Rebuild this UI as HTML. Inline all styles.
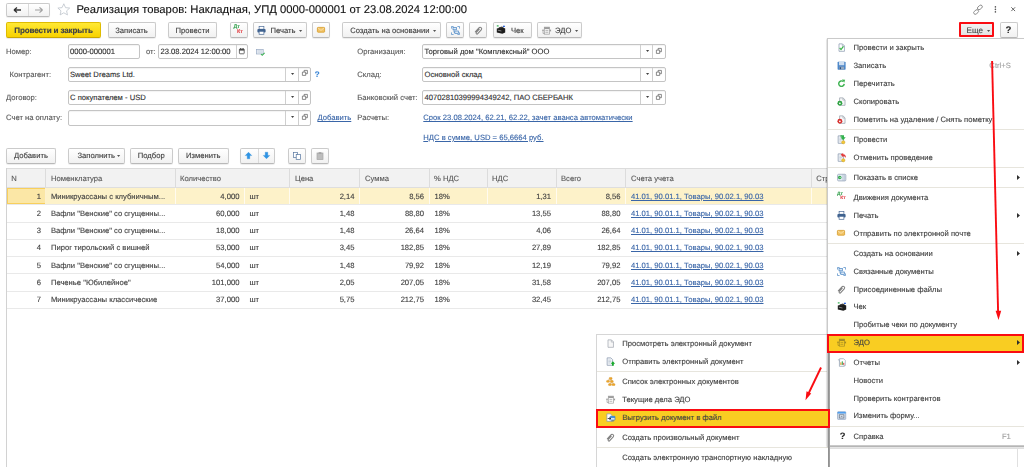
<!DOCTYPE html><html lang="ru"><head><meta charset="utf-8"><title>Реализация товаров</title><style>
html,body{margin:0;padding:0;background:#fff;}
body{width:1024px;height:467px;position:relative;overflow:hidden;font-family:"Liberation Sans",sans-serif;font-size:7.65px;color:#404040;}
div{position:absolute;box-sizing:border-box;}
#r{left:0;top:0;width:1024px;height:467px;overflow:hidden;opacity:.999;text-rendering:geometricPrecision;}
svg{position:absolute;overflow:visible;}
.t{white-space:nowrap;-webkit-text-stroke:.12px;}
.btn{border:1px solid #cbcbcb;border-radius:2px;background:linear-gradient(#ffffff,#f1f1f1);box-shadow:0 1px 1px rgba(0,0,0,.08);border-bottom-color:#b9b9b9;}
.ybtn{border:1px solid #dfbc00;border-radius:2px;background:linear-gradient(#ffe935,#f8d200);box-shadow:0 1px 1px rgba(0,0,0,.1);border-bottom-color:#c9a700;}
.inp{border:1px solid #c4c4c4;border-radius:2px;background:#fff;box-shadow:inset 0 1px 1px rgba(0,0,0,.05);}
.lbl{color:#585858;}
.lnk{color:#3a66a8;text-decoration:underline;text-decoration-thickness:.7px;}
.c{text-align:center;}
.sep{background:#e7e5dd;height:1px;}
.hl{background:#f9cd22;border:2px solid #fa0c12;}
.sc{color:#a2a2a2;}
</style></head><body><div id="r">
<div class="btn" style="left:6px;top:2.5px;width:43.5px;height:14px;"></div>
<div style="left:28px;top:3.5px;width:1px;height:12px;background:#dadada;"></div>
<svg style="left:6px;top:2.5px" width="44" height="14" viewBox="0 0 44 14"><path d="M8 7H15M8 7l3-2.6M8 7l3 2.6" stroke="#333" stroke-width="1.3" fill="none"/><path d="M36.5 7H29M36.5 7l-3-2.6M36.5 7l-3 2.6" stroke="#a0a0a0" stroke-width="1.2" fill="none"/></svg>
<svg style="left:56.7px;top:3px" width="13.6" height="12.6" viewBox="0 0 14 13"><path d="M7 .8l1.8 4 4.3.4-3.2 2.9.9 4.2L7 10.1l-3.8 2.2.9-4.2L.9 5.2l4.3-.4z" fill="#fff" stroke="#bcc2ca" stroke-width=".8"/></svg>
<div class="t " style="left:76.5px;top:2.3px;height:16px;line-height:16px;font-size:11.25px;color:#101010;">Реализация товаров: Накладная, УПД 0000-000001 от 23.08.2024 12:00:00</div>
<svg style="left:972.5px;top:4.5px" width="10" height="9.5" viewBox="0 0 10 9.5"><g fill="none" stroke="#888" stroke-width=".9"><rect x="4.2" y=".8" width="5.4" height="3.2" rx="1.6" transform="rotate(-40 6.9 2.4)"/><rect x=".4" y="5.4" width="5.4" height="3.2" rx="1.6" transform="rotate(-40 3.1 7)"/></g></svg>
<svg style="left:994px;top:5.8px" width="3" height="7" viewBox="0 0 3 7"><circle cx="1.4" cy=".9" r=".8" fill="#555"/><circle cx="1.4" cy="3.4" r=".8" fill="#555"/><circle cx="1.4" cy="5.9" r=".8" fill="#555"/></svg>
<svg style="left:1010.8px;top:7.3px" width="4.4" height="4.4" viewBox="0 0 4.4 4.4"><path d="M.3 .3l3.8 3.8M4.1 .3L.3 4.1" stroke="#555" stroke-width=".9"/></svg>
<div class="ybtn" style="left:6px;top:22px;width:95px;height:15.6px;"></div>
<div class="t c" style="left:6px;width:95px;top:24.9px;height:12px;line-height:12px;font-weight:bold;font-size:8.1px;letter-spacing:-.15px;color:#3e4046;">Провести и закрыть</div>
<div class="btn" style="left:107.5px;top:22px;width:48px;height:15.6px;"></div>
<div class="t c" style="left:107.5px;width:48px;top:24.9px;height:12px;line-height:12px;">Записать</div>
<div class="btn" style="left:168px;top:22px;width:49px;height:15.6px;"></div>
<div class="t c" style="left:168px;width:49px;top:24.9px;height:12px;line-height:12px;">Провести</div>
<div class="btn" style="left:230px;top:22px;width:17.5px;height:15.6px;"></div>
<div class="btn" style="left:253px;top:22px;width:53.5px;height:15.6px;"></div>
<div class="btn" style="left:312px;top:22px;width:17.7px;height:15.6px;"></div>
<div class="btn" style="left:342px;top:22px;width:98.5px;height:15.6px;"></div>
<div class="btn" style="left:446.4px;top:22px;width:17.6px;height:15.6px;"></div>
<div class="btn" style="left:469.4px;top:22px;width:17.6px;height:15.6px;"></div>
<div class="btn" style="left:493px;top:22px;width:38.5px;height:15.6px;"></div>
<div class="btn" style="left:537.2px;top:22px;width:45.3px;height:15.6px;"></div>
<div class="btn" style="left:999.5px;top:22px;width:18px;height:15.6px;"></div>
<div class="t c" style="left:999.5px;width:18px;top:25.3px;height:12px;line-height:12px;font-weight:bold;font-size:9.6px;color:#2a2a2a;">?</div>
<div style="left:958.6px;top:22.4px;width:35.6px;height:15px;background:linear-gradient(#f2f2f2,#e4e4e4);border:2px solid #fa0c12;border-radius:1px;"></div>
<div class="t " style="left:966.6px;top:24.6px;height:12px;line-height:12px;font-size:8.1px;color:#484848;">Еще</div>
<svg style="left:986.7px;top:30px" width="3.2" height="1.9" viewBox="0 0 3.2 1.9"><path d="M0 0h3.2L1.6 1.9z" fill="#555"/></svg>
<div class="t" style="left:233.6px;top:25.3px;font-size:5.3px;line-height:5.3px;font-weight:bold;color:#3aa352;">Дт</div>
<div class="t" style="left:237.098px;top:30.335px;font-size:5.3px;line-height:5.3px;font-weight:bold;color:#e2464b;">Кт</div>
<svg style="left:256.8px;top:25.8px" width="9" height="9" viewBox="0 0 9 9"><rect x="2.1" y=".6" width="4.8" height="2.6" fill="#fff" stroke="#4a6a96" stroke-width=".7"/><rect x=".4" y="3" width="8.2" height="3.6" rx="1" fill="#3f628f"/><rect x="2.1" y="5.3" width="4.8" height="3" fill="#fff" stroke="#4a6a96" stroke-width=".7"/></svg>
<div class="t " style="left:270.5px;top:24.9px;height:12px;line-height:12px;">Печать</div>
<svg style="left:298.7px;top:30px" width="3.2" height="1.9" viewBox="0 0 3.2 1.9"><path d="M0 0h3.2L1.6 1.9z" fill="#555"/></svg>
<svg style="left:317.3px;top:27.3px" width="8" height="5.6" viewBox="0 0 8 5.6"><rect x=".4" y=".4" width="7.2" height="4.8" rx=".6" fill="#f2c466" stroke="#d69a28" stroke-width=".8"/><path d="M.9 .9L4 3.4 7.1 .9" stroke="#fbe9c3" stroke-width=".7" fill="none"/></svg>
<div class="t " style="left:350.3px;top:24.9px;height:12px;line-height:12px;">Создать на основании</div>
<svg style="left:432.7px;top:30px" width="3.2" height="1.9" viewBox="0 0 3.2 1.9"><path d="M0 0h3.2L1.6 1.9z" fill="#555"/></svg>
<svg style="left:451px;top:25.8px" width="9" height="9" viewBox="0 0 9 9"><g fill="#dbe8f6" stroke="#4a86c4" stroke-width=".7"><rect x="2" y="1.4" width="3.4" height="2.4"/><rect x="3.8" y="5" width="3.6" height="2.6"/></g><path d="M.5 2.6V.5h2.1M8.5 2.6V.5H6.4M.5 6.4v2.1h2.1M8.5 6.4v2.1H6.4M3 3.8v2.6h.8" fill="none" stroke="#4a86c4" stroke-width=".7"/></svg>
<svg style="left:473.5px;top:25.8px" width="9" height="9" viewBox="0 0 9 9"><g transform="rotate(42 4.5 4.5)"><path d="M3 7.6V2.2a1.55 1.55 0 0 1 3.1 0v5.2a.95.95 0 0 1-1.9 0V3" fill="none" stroke="#808080" stroke-width="1.05" stroke-linecap="round"/></g></svg>
<svg style="left:496.3px;top:24.8px" width="10" height="9" viewBox="0 0 10 9"><path d="M.8 3.6l5.6-1.4 2.8 1.4v3.8L6.4 8.8.8 7.4z" fill="#1c1c1c"/><path d="M2.4 2.4l3.6-.9 1.8 1-3.6 1z" fill="#3a3a3a"/><rect x=".8" y=".3" width="1.8" height="1.2" fill="#2eae4e"/><rect x="7" y=".7" width="1.9" height="1.3" fill="#2a62d9"/><path d="M1.8 5.2l3.6.8" stroke="#c8c8c8" stroke-width=".6"/></svg>
<div class="t " style="left:511px;top:24.9px;height:12px;line-height:12px;">Чек</div>
<svg style="left:541.6px;top:25.6px" width="9.2" height="9.2" viewBox="0 0 16 16"><g fill="none" stroke="#9a9a9a" stroke-width="1.2"><rect x="4" y="2" width="9" height="12.2"/><path d="M6 8h5M6 11h5"/><path d="M4.2 13H1.8V7.4"/></g><rect x="4" y="2" width="9" height="3.4" fill="#9a9a9a"/><path d="M1.8 5.2L-.2 8.2h4zM12.6 7.8l3.2-2v4z" fill="#9a9a9a"/></svg>
<div class="t " style="left:555px;top:24.9px;height:12px;line-height:12px;">ЭДО</div>
<svg style="left:574.7px;top:30px" width="3.2" height="1.9" viewBox="0 0 3.2 1.9"><path d="M0 0h3.2L1.6 1.9z" fill="#555"/></svg>
<div class="t lbl" style="left:6px;top:46px;height:12px;line-height:12px;">Номер:</div>
<div class="inp" style="left:67.5px;top:44px;width:72px;height:15px;"></div>
<div class="t " style="left:70px;top:46px;height:12px;line-height:12px;color:#303030;">0000-000001</div>
<div class="t lbl" style="left:146px;top:46px;height:12px;line-height:12px;">от:</div>
<div class="inp" style="left:158px;top:44px;width:89.5px;height:15px;"></div>
<div class="t " style="left:160.5px;top:46px;height:12px;line-height:12px;color:#303030;">23.08.2024 12:00:00</div>
<div style="left:235.5px;top:45px;width:1px;height:13px;background:#cfcfcf;"></div>
<svg style="left:238.7px;top:47.9px" width="5.6" height="6.2" viewBox="0 0 5.6 6.2"><rect x=".4" y="1" width="4.8" height="4.8" rx=".6" fill="#fff" stroke="#4a4a4a" stroke-width=".8"/><rect x=".4" y="1" width="4.8" height="1.6" fill="#4a4a4a"/><path d="M1.5 0v1.4M4.1 0v1.4" stroke="#4a4a4a" stroke-width=".8"/></svg>
<svg style="left:255.7px;top:48.8px" width="9" height="7" viewBox="0 0 9 7"><rect x=".4" y=".4" width="6.8" height="4.6" fill="#e9eef5" stroke="#9aabc4" stroke-width=".7"/><path d="M1.5 1.8h4.6M1.5 3.2h4.6" stroke="#bcc7d8" stroke-width=".6"/><path d="M5 5l1.2 1.3L8.6 3.8" stroke="#3ab052" stroke-width="1.1" fill="none"/></svg>
<div class="t lbl" style="left:9.5px;top:68.5px;height:12px;line-height:12px;">Контрагент:</div>
<div class="inp" style="left:67.5px;top:67px;width:243.3px;height:15px;"></div>
<div class="t " style="left:70px;top:68.5px;height:12px;line-height:12px;color:#303030;">Sweet Dreams Ltd.</div>
<div style="left:285.3px;top:68px;width:1px;height:13px;background:#cfcfcf;"></div>
<div style="left:298.2px;top:68px;width:1px;height:13px;background:#cfcfcf;"></div>
<svg style="left:290.6px;top:72.7px" width="3.2" height="1.9" viewBox="0 0 3.2 1.9"><path d="M0 0h3.2L1.6 1.9z" fill="#444"/></svg>
<svg style="left:301.7px;top:70.4px" width="5.8" height="5.8" viewBox="0 0 5.8 5.8"><path d="M2.1 .4h3.3v3.3H2.1z" fill="#fff" stroke="#5a5a5a" stroke-width=".7"/><path d="M.4 2.1h3.3v3.3H.4z" fill="#fff" stroke="#5a5a5a" stroke-width=".7"/></svg>
<div class="t " style="left:314.7px;top:68.5px;height:12px;line-height:12px;color:#3b86d6;font-weight:bold;font-size:8px;">?</div>
<div class="t lbl" style="left:6px;top:92px;height:12px;line-height:12px;">Договор:</div>
<div class="inp" style="left:67.5px;top:90px;width:243.3px;height:15px;"></div>
<div class="t " style="left:70px;top:92px;height:12px;line-height:12px;color:#303030;">С покупателем - USD</div>
<div style="left:285.3px;top:91px;width:1px;height:13px;background:#cfcfcf;"></div>
<div style="left:298.2px;top:91px;width:1px;height:13px;background:#cfcfcf;"></div>
<svg style="left:290.6px;top:96.2px" width="3.2" height="1.9" viewBox="0 0 3.2 1.9"><path d="M0 0h3.2L1.6 1.9z" fill="#444"/></svg>
<svg style="left:301.7px;top:93.9px" width="5.8" height="5.8" viewBox="0 0 5.8 5.8"><path d="M2.1 .4h3.3v3.3H2.1z" fill="#fff" stroke="#5a5a5a" stroke-width=".7"/><path d="M.4 2.1h3.3v3.3H.4z" fill="#fff" stroke="#5a5a5a" stroke-width=".7"/></svg>
<div class="t lbl" style="left:6px;top:112.2px;height:12px;line-height:12px;">Счет на оплату:</div>
<div class="inp" style="left:67.5px;top:110px;width:243.3px;height:16px;"></div>
<div style="left:285.3px;top:111px;width:1px;height:14px;background:#cfcfcf;"></div>
<div style="left:298.2px;top:111px;width:1px;height:14px;background:#cfcfcf;"></div>
<svg style="left:290.6px;top:116.4px" width="3.2" height="1.9" viewBox="0 0 3.2 1.9"><path d="M0 0h3.2L1.6 1.9z" fill="#444"/></svg>
<svg style="left:301.7px;top:114.1px" width="5.8" height="5.8" viewBox="0 0 5.8 5.8"><path d="M2.1 .4h3.3v3.3H2.1z" fill="#fff" stroke="#5a5a5a" stroke-width=".7"/><path d="M.4 2.1h3.3v3.3H.4z" fill="#fff" stroke="#5a5a5a" stroke-width=".7"/></svg>
<div class="t lnk" style="left:317.5px;top:112.2px;height:12px;line-height:12px;">Добавить</div>
<div class="t lbl" style="left:357.3px;top:46px;height:12px;line-height:12px;">Организация:</div>
<div class="inp" style="left:422px;top:44px;width:243.6px;height:15px;"></div>
<div class="t " style="left:424.5px;top:46px;height:12px;line-height:12px;color:#303030;">Торговый дом "Комплексный" ООО</div>
<div style="left:640.2px;top:45px;width:1px;height:13px;background:#cfcfcf;"></div>
<div style="left:652.2px;top:45px;width:1px;height:13px;background:#cfcfcf;"></div>
<svg style="left:645.5px;top:50.2px" width="3.2" height="1.9" viewBox="0 0 3.2 1.9"><path d="M0 0h3.2L1.6 1.9z" fill="#444"/></svg>
<svg style="left:655.7px;top:47.9px" width="5.8" height="5.8" viewBox="0 0 5.8 5.8"><path d="M2.1 .4h3.3v3.3H2.1z" fill="#fff" stroke="#5a5a5a" stroke-width=".7"/><path d="M.4 2.1h3.3v3.3H.4z" fill="#fff" stroke="#5a5a5a" stroke-width=".7"/></svg>
<div class="t lbl" style="left:357.3px;top:68.5px;height:12px;line-height:12px;">Склад:</div>
<div class="inp" style="left:422px;top:67px;width:243.6px;height:15px;"></div>
<div class="t " style="left:424.5px;top:68.5px;height:12px;line-height:12px;color:#303030;">Основной склад</div>
<div style="left:640.2px;top:68px;width:1px;height:13px;background:#cfcfcf;"></div>
<div style="left:652.2px;top:68px;width:1px;height:13px;background:#cfcfcf;"></div>
<svg style="left:645.5px;top:72.7px" width="3.2" height="1.9" viewBox="0 0 3.2 1.9"><path d="M0 0h3.2L1.6 1.9z" fill="#444"/></svg>
<svg style="left:655.7px;top:70.4px" width="5.8" height="5.8" viewBox="0 0 5.8 5.8"><path d="M2.1 .4h3.3v3.3H2.1z" fill="#fff" stroke="#5a5a5a" stroke-width=".7"/><path d="M.4 2.1h3.3v3.3H.4z" fill="#fff" stroke="#5a5a5a" stroke-width=".7"/></svg>
<div class="t lbl" style="left:357.3px;top:92px;height:12px;line-height:12px;">Банковский счет:</div>
<div class="inp" style="left:422px;top:90px;width:243.6px;height:15px;"></div>
<div class="t " style="left:424.5px;top:92px;height:12px;line-height:12px;color:#303030;">40702810399994349242, ПАО СБЕРБАНК</div>
<div style="left:640.2px;top:91px;width:1px;height:13px;background:#cfcfcf;"></div>
<div style="left:652.2px;top:91px;width:1px;height:13px;background:#cfcfcf;"></div>
<svg style="left:645.5px;top:96.2px" width="3.2" height="1.9" viewBox="0 0 3.2 1.9"><path d="M0 0h3.2L1.6 1.9z" fill="#444"/></svg>
<svg style="left:655.7px;top:93.9px" width="5.8" height="5.8" viewBox="0 0 5.8 5.8"><path d="M2.1 .4h3.3v3.3H2.1z" fill="#fff" stroke="#5a5a5a" stroke-width=".7"/><path d="M.4 2.1h3.3v3.3H.4z" fill="#fff" stroke="#5a5a5a" stroke-width=".7"/></svg>
<div class="t lbl" style="left:357.3px;top:112.2px;height:12px;line-height:12px;">Расчеты:</div>
<div class="t lnk" style="left:423.3px;top:112.2px;height:12px;line-height:12px;">Срок 23.08.2024, 62.21, 62.22, зачет аванса автоматически</div>
<div class="t lnk" style="left:423.3px;top:131.6px;height:12px;line-height:12px;">НДС в сумме, USD = 65,6664 руб.</div>
<div class="btn" style="left:6px;top:148px;width:50px;height:15.6px;"></div>
<div class="t c" style="left:6px;width:50px;top:150.4px;height:12px;line-height:12px;">Добавить</div>
<div class="btn" style="left:68px;top:148px;width:56.5px;height:15.6px;"></div>
<div class="t " style="left:77.5px;top:150.4px;height:12px;line-height:12px;">Заполнить</div>
<svg style="left:116.7px;top:155.1px" width="3.2" height="1.9" viewBox="0 0 3.2 1.9"><path d="M0 0h3.2L1.6 1.9z" fill="#555"/></svg>
<div class="btn" style="left:130px;top:148px;width:42.5px;height:15.6px;"></div>
<div class="t c" style="left:130px;width:42.5px;top:150.4px;height:12px;line-height:12px;">Подбор</div>
<div class="btn" style="left:178px;top:148px;width:50.5px;height:15.6px;"></div>
<div class="t c" style="left:178px;width:50.5px;top:150.4px;height:12px;line-height:12px;">Изменить</div>
<div class="btn" style="left:240.3px;top:148px;width:35.1px;height:15.6px;"></div>
<div style="left:257.6px;top:149px;width:1px;height:13.6px;background:#dadada;"></div>
<svg style="left:245.4px;top:152px" width="7" height="7" viewBox="0 0 7 7"><path d="M3.5 .2L6.8 3.6H4.8V6.8H2.2V3.6H.2z" fill="#2d94e6" stroke="#2583cf" stroke-width=".3"/></svg>
<svg style="left:262.8px;top:152px" width="7" height="7" viewBox="0 0 7 7"><path d="M3.5 6.8L6.8 3.4H4.8V.2H2.2V3.4H.2z" fill="#2d94e6" stroke="#2583cf" stroke-width=".3"/></svg>
<div class="btn" style="left:287.5px;top:148px;width:18px;height:15.6px;"></div>
<div class="btn" style="left:311px;top:148px;width:18px;height:15.6px;"></div>
<svg style="left:292.7px;top:151.6px" width="8" height="8" viewBox="0 0 8 8"><rect x=".4" y=".4" width="4.2" height="5" fill="#fff" stroke="#55759f" stroke-width=".7"/><rect x="3.2" y="2.6" width="4.2" height="5" fill="#fff" stroke="#55759f" stroke-width=".7"/></svg>
<svg style="left:316px;top:151.6px" width="8" height="8" viewBox="0 0 8 8"><rect x="1" y="1" width="6" height="6.6" fill="#bdbdbd" stroke="#a6a6a6" stroke-width=".7"/><rect x="2.6" y=".2" width="2.8" height="1.6" fill="#a0a0a0"/></svg>
<div style="left:6px;top:168px;width:1018px;height:20px;background:#f2f2f2;border-top:1px solid #dcdcdc;border-bottom:1px solid #dedede;"></div>
<div style="left:6px;top:168.3px;width:1px;height:298.7px;background:#d2d2d2;"></div>
<div style="left:45.2px;top:169px;width:1px;height:18px;background:#dcdcdc;"></div>
<div style="left:175px;top:169px;width:1px;height:18px;background:#dcdcdc;"></div>
<div style="left:289.3px;top:169px;width:1px;height:18px;background:#dcdcdc;"></div>
<div style="left:359.2px;top:169px;width:1px;height:18px;background:#dcdcdc;"></div>
<div style="left:429px;top:169px;width:1px;height:18px;background:#dcdcdc;"></div>
<div style="left:486.5px;top:169px;width:1px;height:18px;background:#dcdcdc;"></div>
<div style="left:555.5px;top:169px;width:1px;height:18px;background:#dcdcdc;"></div>
<div style="left:625px;top:169px;width:1px;height:18px;background:#dcdcdc;"></div>
<div style="left:811.2px;top:169px;width:1px;height:18px;background:#dcdcdc;"></div>
<div class="t lbl" style="left:11.3px;top:172.8px;height:12px;line-height:12px;">N</div>
<div class="t lbl" style="left:51px;top:172.8px;height:12px;line-height:12px;">Номенклатура</div>
<div class="t lbl" style="left:180px;top:172.8px;height:12px;line-height:12px;">Количество</div>
<div class="t lbl" style="left:295px;top:172.8px;height:12px;line-height:12px;">Цена</div>
<div class="t lbl" style="left:365px;top:172.8px;height:12px;line-height:12px;">Сумма</div>
<div class="t lbl" style="left:434px;top:172.8px;height:12px;line-height:12px;">% НДС</div>
<div class="t lbl" style="left:492px;top:172.8px;height:12px;line-height:12px;">НДС</div>
<div class="t lbl" style="left:561px;top:172.8px;height:12px;line-height:12px;">Всего</div>
<div class="t lbl" style="left:631px;top:172.8px;height:12px;line-height:12px;">Счета учета</div>
<div class="t lbl" style="left:816.2px;top:172.8px;height:12px;line-height:12px;">Стр</div>
<div style="left:7px;top:187.5px;width:1017px;height:17.25px;background:#fdf2c9;"></div>
<div style="left:7px;top:187.5px;width:38.7px;height:16.95px;background:#fbe7a6;border:1.5px solid #f8cf5c;"></div>
<div style="left:45.2px;top:187.5px;width:1px;height:17.25px;background:#fff;opacity:.7"></div>
<div style="left:175px;top:187.5px;width:1px;height:17.25px;background:#fff;opacity:.7"></div>
<div style="left:289.3px;top:187.5px;width:1px;height:17.25px;background:#fff;opacity:.7"></div>
<div style="left:359.2px;top:187.5px;width:1px;height:17.25px;background:#fff;opacity:.7"></div>
<div style="left:429px;top:187.5px;width:1px;height:17.25px;background:#fff;opacity:.7"></div>
<div style="left:486.5px;top:187.5px;width:1px;height:17.25px;background:#fff;opacity:.7"></div>
<div style="left:555.5px;top:187.5px;width:1px;height:17.25px;background:#fff;opacity:.7"></div>
<div style="left:625px;top:187.5px;width:1px;height:17.25px;background:#fff;opacity:.7"></div>
<div style="left:811.2px;top:187.5px;width:1px;height:17.25px;background:#fff;opacity:.7"></div>
<div style="left:244px;top:187.5px;width:1px;height:17.25px;background:#fff;opacity:.7"></div>
<div style="left:7px;top:204.25px;width:1017px;height:1px;background:#e9e9e9;"></div>
<div class="t " style="right:983px;top:190.625px;height:12px;line-height:12px;">1</div>
<div class="t " style="left:50.9px;top:190.625px;height:12px;line-height:12px;">Миникруассаны с клубничным...</div>
<div class="t " style="right:784.6px;top:190.625px;height:12px;line-height:12px;">4,000</div>
<div class="t " style="left:249.4px;top:190.625px;height:12px;line-height:12px;">шт</div>
<div class="t " style="right:669.5px;top:190.625px;height:12px;line-height:12px;">2,14</div>
<div class="t " style="right:600px;top:190.625px;height:12px;line-height:12px;">8,56</div>
<div class="t " style="left:434.5px;top:190.625px;height:12px;line-height:12px;">18%</div>
<div class="t " style="right:473px;top:190.625px;height:12px;line-height:12px;">1,31</div>
<div class="t " style="right:403.5px;top:190.625px;height:12px;line-height:12px;">8,56</div>
<div class="t lnk" style="left:631px;top:190.625px;height:12px;line-height:12px;">41.01, 90.01.1, Товары, 90.02.1, 90.03</div>
<div style="left:7px;top:221.5px;width:1017px;height:1px;background:#e9e9e9;"></div>
<div class="t " style="right:983px;top:207.875px;height:12px;line-height:12px;">2</div>
<div class="t " style="left:50.9px;top:207.875px;height:12px;line-height:12px;">Вафли "Венские" со сгущенны...</div>
<div class="t " style="right:784.6px;top:207.875px;height:12px;line-height:12px;">60,000</div>
<div class="t " style="left:249.4px;top:207.875px;height:12px;line-height:12px;">шт</div>
<div class="t " style="right:669.5px;top:207.875px;height:12px;line-height:12px;">1,48</div>
<div class="t " style="right:600px;top:207.875px;height:12px;line-height:12px;">88,80</div>
<div class="t " style="left:434.5px;top:207.875px;height:12px;line-height:12px;">18%</div>
<div class="t " style="right:473px;top:207.875px;height:12px;line-height:12px;">13,55</div>
<div class="t " style="right:403.5px;top:207.875px;height:12px;line-height:12px;">88,80</div>
<div class="t lnk" style="left:631px;top:207.875px;height:12px;line-height:12px;">41.01, 90.01.1, Товары, 90.02.1, 90.03</div>
<div style="left:7px;top:238.75px;width:1017px;height:1px;background:#e9e9e9;"></div>
<div class="t " style="right:983px;top:225.125px;height:12px;line-height:12px;">3</div>
<div class="t " style="left:50.9px;top:225.125px;height:12px;line-height:12px;">Вафли "Венские" со сгущенны...</div>
<div class="t " style="right:784.6px;top:225.125px;height:12px;line-height:12px;">18,000</div>
<div class="t " style="left:249.4px;top:225.125px;height:12px;line-height:12px;">шт</div>
<div class="t " style="right:669.5px;top:225.125px;height:12px;line-height:12px;">1,48</div>
<div class="t " style="right:600px;top:225.125px;height:12px;line-height:12px;">26,64</div>
<div class="t " style="left:434.5px;top:225.125px;height:12px;line-height:12px;">18%</div>
<div class="t " style="right:473px;top:225.125px;height:12px;line-height:12px;">4,06</div>
<div class="t " style="right:403.5px;top:225.125px;height:12px;line-height:12px;">26,64</div>
<div class="t lnk" style="left:631px;top:225.125px;height:12px;line-height:12px;">41.01, 90.01.1, Товары, 90.02.1, 90.03</div>
<div style="left:7px;top:256px;width:1017px;height:1px;background:#e9e9e9;"></div>
<div class="t " style="right:983px;top:242.375px;height:12px;line-height:12px;">4</div>
<div class="t " style="left:50.9px;top:242.375px;height:12px;line-height:12px;">Пирог тирольский с вишней</div>
<div class="t " style="right:784.6px;top:242.375px;height:12px;line-height:12px;">53,000</div>
<div class="t " style="left:249.4px;top:242.375px;height:12px;line-height:12px;">шт</div>
<div class="t " style="right:669.5px;top:242.375px;height:12px;line-height:12px;">3,45</div>
<div class="t " style="right:600px;top:242.375px;height:12px;line-height:12px;">182,85</div>
<div class="t " style="left:434.5px;top:242.375px;height:12px;line-height:12px;">18%</div>
<div class="t " style="right:473px;top:242.375px;height:12px;line-height:12px;">27,89</div>
<div class="t " style="right:403.5px;top:242.375px;height:12px;line-height:12px;">182,85</div>
<div class="t lnk" style="left:631px;top:242.375px;height:12px;line-height:12px;">41.01, 90.01.1, Товары, 90.02.1, 90.03</div>
<div style="left:7px;top:273.25px;width:1017px;height:1px;background:#e9e9e9;"></div>
<div class="t " style="right:983px;top:259.625px;height:12px;line-height:12px;">5</div>
<div class="t " style="left:50.9px;top:259.625px;height:12px;line-height:12px;">Вафли "Венские" со сгущенны...</div>
<div class="t " style="right:784.6px;top:259.625px;height:12px;line-height:12px;">54,000</div>
<div class="t " style="left:249.4px;top:259.625px;height:12px;line-height:12px;">шт</div>
<div class="t " style="right:669.5px;top:259.625px;height:12px;line-height:12px;">1,48</div>
<div class="t " style="right:600px;top:259.625px;height:12px;line-height:12px;">79,92</div>
<div class="t " style="left:434.5px;top:259.625px;height:12px;line-height:12px;">18%</div>
<div class="t " style="right:473px;top:259.625px;height:12px;line-height:12px;">12,19</div>
<div class="t " style="right:403.5px;top:259.625px;height:12px;line-height:12px;">79,92</div>
<div class="t lnk" style="left:631px;top:259.625px;height:12px;line-height:12px;">41.01, 90.01.1, Товары, 90.02.1, 90.03</div>
<div style="left:7px;top:290.5px;width:1017px;height:1px;background:#e9e9e9;"></div>
<div class="t " style="right:983px;top:276.875px;height:12px;line-height:12px;">6</div>
<div class="t " style="left:50.9px;top:276.875px;height:12px;line-height:12px;">Печенье "Юбилейное"</div>
<div class="t " style="right:784.6px;top:276.875px;height:12px;line-height:12px;">101,000</div>
<div class="t " style="left:249.4px;top:276.875px;height:12px;line-height:12px;">шт</div>
<div class="t " style="right:669.5px;top:276.875px;height:12px;line-height:12px;">2,05</div>
<div class="t " style="right:600px;top:276.875px;height:12px;line-height:12px;">207,05</div>
<div class="t " style="left:434.5px;top:276.875px;height:12px;line-height:12px;">18%</div>
<div class="t " style="right:473px;top:276.875px;height:12px;line-height:12px;">31,58</div>
<div class="t " style="right:403.5px;top:276.875px;height:12px;line-height:12px;">207,05</div>
<div class="t lnk" style="left:631px;top:276.875px;height:12px;line-height:12px;">41.01, 90.01.1, Товары, 90.02.1, 90.03</div>
<div style="left:7px;top:307.75px;width:1017px;height:1px;background:#e9e9e9;"></div>
<div class="t " style="right:983px;top:294.125px;height:12px;line-height:12px;">7</div>
<div class="t " style="left:50.9px;top:294.125px;height:12px;line-height:12px;">Миникруассаны классические</div>
<div class="t " style="right:784.6px;top:294.125px;height:12px;line-height:12px;">37,000</div>
<div class="t " style="left:249.4px;top:294.125px;height:12px;line-height:12px;">шт</div>
<div class="t " style="right:669.5px;top:294.125px;height:12px;line-height:12px;">5,75</div>
<div class="t " style="right:600px;top:294.125px;height:12px;line-height:12px;">212,75</div>
<div class="t " style="left:434.5px;top:294.125px;height:12px;line-height:12px;">18%</div>
<div class="t " style="right:473px;top:294.125px;height:12px;line-height:12px;">32,45</div>
<div class="t " style="right:403.5px;top:294.125px;height:12px;line-height:12px;">212,75</div>
<div class="t lnk" style="left:631px;top:294.125px;height:12px;line-height:12px;">41.01, 90.01.1, Товары, 90.02.1, 90.03</div>
<div style="left:830px;top:448px;width:194px;height:1px;background:#e0e0e0;"></div>
<div style="left:1017px;top:448px;width:1px;height:19px;background:#e0e0e0;"></div>
<div style="left:595.5px;top:333.5px;width:234px;height:140px;background:#fff;border:1px solid #d6d6d6;border-right:none;"></div>
<div class="sep" style="left:596.5px;top:370.9px;width:232.5px;height:1px;"></div>
<div class="sep" style="left:596.5px;top:446.9px;width:232.5px;height:1px;"></div>
<svg style="left:605.6px;top:339.1px" width="9.2" height="9.2" viewBox="0 0 16 16"><path d="M3.5 1.5h6l3.5 3.5v9.5h-9.5z" fill="#f7f7f7" stroke="#a5aab2" stroke-width="1.3"/><path d="M9.3 1.8v3.6h3.6" fill="none" stroke="#a5aab2" stroke-width="1"/></svg>
<div class="t " style="left:622.2px;top:337.9px;height:12px;line-height:12px;">Просмотреть электронный документ</div>
<svg style="left:605.6px;top:357.4px" width="9.2" height="9.2" viewBox="0 0 16 16"><path d="M2 1.5h6.5l3 3v10H2z" fill="#f1f4f8" stroke="#8c9bb0" stroke-width="1.3"/><path d="M4 5.5h4.5M4 8h5M4 10.5h3.5" stroke="#a9b5c6" stroke-width="1"/><path d="M12 7.4l3.8 4.2h-2.2v3.6h-3.2v-3.6H8.2z" fill="#18a82c"/></svg>
<div class="t " style="left:622.2px;top:356.2px;height:12px;line-height:12px;">Отправить электронный документ</div>
<svg style="left:605.6px;top:377.4px" width="9.2" height="9.2" viewBox="0 0 16 16"><g fill="#f1a92c" stroke="#d08a18" stroke-width=".7"><rect x="5.6" y=".8" width="5" height="3.2" rx="1"/><rect x="1" y="6" width="5" height="3.2" rx="1"/><rect x="7.6" y="6" width="5" height="3.2" rx="1"/><rect x="4.4" y="11.6" width="5" height="3.2" rx="1"/><rect x="10.6" y="11.6" width="5" height="3.2" rx="1"/></g><path d="M8 4v1M3.6 6V5h6.6v1M10 9.2v1.2M6.8 11.6v-1.2h6.4v1.2" stroke="#d08a18" stroke-width=".8" fill="none"/></svg>
<div class="t " style="left:622.2px;top:376.2px;height:12px;line-height:12px;">Список электронных документов</div>
<svg style="left:605.6px;top:395.3px" width="9.2" height="9.2" viewBox="0 0 16 16"><g fill="none" stroke="#9c9c9c" stroke-width="1.2"><rect x="4" y="2" width="9" height="12.2"/><path d="M6 8h5M6 11h5"/><path d="M4.2 13H1.8V7.4"/></g><rect x="4" y="2" width="9" height="3.4" fill="#9c9c9c"/><path d="M1.8 5.2L-.2 8.2h4zM12.6 7.8l3.2-2v4z" fill="#9c9c9c"/></svg>
<div class="t " style="left:622.2px;top:394.1px;height:12px;line-height:12px;">Текущие дела ЭДО</div>
<svg style="left:605.7px;top:433.2px" width="9" height="9" viewBox="0 0 9 9"><g transform="rotate(42 4.5 4.5)"><path d="M3 7.6V2.2a1.55 1.55 0 0 1 3.1 0v5.2a.95.95 0 0 1-1.9 0V3" fill="none" stroke="#808080" stroke-width="1.05" stroke-linecap="round"/></g></svg>
<div class="t " style="left:622.2px;top:431.9px;height:12px;line-height:12px;">Создать произвольный документ</div>
<div class="t " style="left:622.2px;top:452.1px;height:12px;line-height:12px;">Создать электронную транспортную накладную</div>
<div style="left:827.4px;top:38px;width:198.6px;height:408px;background:#fff;border:1px solid #cacaca;box-shadow:0 1px 1.5px rgba(0,0,0,.4);"></div>
<div class="sep" style="left:828.4px;top:128.8px;width:196.6px;height:1px;"></div>
<div class="sep" style="left:828.4px;top:166.8px;width:196.6px;height:1px;"></div>
<div class="sep" style="left:828.4px;top:187px;width:196.6px;height:1px;"></div>
<div class="sep" style="left:828.4px;top:242.7px;width:196.6px;height:1px;"></div>
<div class="sep" style="left:828.4px;top:426px;width:196.6px;height:1px;"></div>
<div style="left:828px;top:352.3px;width:2px;height:114.7px;background:linear-gradient(90deg,#9a9a9a,#8a8a8a 50%,#b5b5b5);"></div>
<div class="hl" style="left:827.2px;top:333.6px;width:197px;height:19px;"></div>
<div class="hl" style="left:595.5px;top:408.6px;width:234.5px;height:19.2px;"></div>
<svg style="left:605.8px;top:413.2px" width="9.2" height="9.2" viewBox="0 0 16 16"><path d="M1.5 1.5h6l3.5 3.5v9.5H1.5z" fill="#fff" stroke="#8a939e" stroke-width="1.2"/><rect x="7.4" y="5.8" width="8.2" height="6.6" rx=".6" fill="#d6e6f6" stroke="#2f80d2" stroke-width="1.2"/><rect x="7.4" y="5.8" width="8.2" height="2.6" fill="#2f80d2"/><rect x="9" y="13" width="5" height="1.6" fill="#6d7b8c"/><path d="M3 9.6h5M6 7.6l2.4 2L6 11.6" stroke="#1c1c1c" stroke-width="1.3" fill="none"/></svg>
<div class="t " style="left:622.2px;top:411.9px;height:12px;line-height:12px;">Выгрузить документ в файл</div>
<svg style="left:837.2px;top:43.4px" width="9.2" height="9.2" viewBox="0 0 16 16"><path d="M3.5 1.5h6l3.5 3.5v9.5h-9.5z" fill="#fff" stroke="#8e9db3" stroke-width="1.3"/><path d="M9.3 1.8v3.6h3.6" fill="none" stroke="#8e9db3" stroke-width="1"/><path d="M4.6 8.6l2.4 2.8 4.2-5.4" fill="none" stroke="#3cb54a" stroke-width="2.2"/></svg>
<div class="t " style="left:853.5px;top:42.4px;height:12px;line-height:12px;">Провести и закрыть</div>
<svg style="left:837.2px;top:60.7px" width="9.2" height="9.2" viewBox="0 0 16 16"><rect x="1" y="1.2" width="14" height="14" rx="1.2" fill="#4b86c9"/><rect x="3.4" y="1.6" width="9.2" height="5.8" fill="#cfdff1"/><rect x="3.8" y="9.8" width="8.4" height="5.2" fill="#93a7be"/><rect x="4.8" y="10.8" width="2.2" height="3.4" fill="#2d4f80"/></svg>
<div class="t " style="left:853.5px;top:59.7px;height:12px;line-height:12px;">Записать</div>
<div class="t sc" style="right:13.2px;top:59.7px;height:12px;line-height:12px;">Ctrl+S</div>
<svg style="left:837.2px;top:78.9px" width="9.2" height="9.2" viewBox="0 0 16 16"><path d="M12.6 8.6a4.8 4.8 0 1 1-1.9-4.4" fill="none" stroke="#3db250" stroke-width="2.5"/><path d="M8.6 1l5.6.4-1.6 5.2z" fill="#3db250"/></svg>
<div class="t " style="left:853.5px;top:77.9px;height:12px;line-height:12px;">Перечитать</div>
<svg style="left:837.2px;top:96.7px" width="9.2" height="9.2" viewBox="0 0 16 16"><path d="M4.5 1.5h6l3.5 3.5v9.5H4.5z" fill="#f6f7f8" stroke="#9aa3ad" stroke-width="1.3"/><path d="M10.3 1.8v3.6h3.6" fill="none" stroke="#9aa3ad" stroke-width="1"/><circle cx="5" cy="11" r="4.3" fill="#2fa343"/><circle cx="5" cy="11" r="1.5" fill="#fff"/></svg>
<div class="t " style="left:853.5px;top:95.7px;height:12px;line-height:12px;">Скопировать</div>
<svg style="left:837.2px;top:114.7px" width="9.2" height="9.2" viewBox="0 0 16 16"><path d="M4.5 1.5h6l3.5 3.5v9.5H4.5z" fill="#f6f7f8" stroke="#9aa3ad" stroke-width="1.3"/><path d="M10.3 1.8v3.6h3.6" fill="none" stroke="#9aa3ad" stroke-width="1"/><circle cx="5" cy="11" r="4.3" fill="#d8312f"/><circle cx="5" cy="11" r="1.5" fill="#fff"/></svg>
<div class="t " style="left:853.5px;top:113.7px;height:12px;line-height:12px;">Пометить на удаление / Снять пометку</div>
<svg style="left:837.2px;top:135.1px" width="9.2" height="9.2" viewBox="0 0 16 16"><path d="M2 1.5h6.5l3 3v10H2z" fill="#f1f4f8" stroke="#8c9bb0" stroke-width="1.3"/><path d="M4 5.5h4.5M4 8h5M4 10.5h3.5" stroke="#a9b5c6" stroke-width="1"/><path d="M6 .4h6.2v3.4h3L10.6 9.2 6 3.8h3V3H6z" fill="#2fb14a"/><circle cx="11" cy="12.6" r="2.8" fill="#f4c838" stroke="#d2a41f" stroke-width=".9"/></svg>
<div class="t " style="left:853.5px;top:134.1px;height:12px;line-height:12px;">Провести</div>
<svg style="left:837.2px;top:153.3px" width="9.2" height="9.2" viewBox="0 0 16 16"><path d="M2 1.5h6.5l3 3v10H2z" fill="#f1f4f8" stroke="#8c9bb0" stroke-width="1.3"/><path d="M4 5.5h4.5M4 8h5M4 10.5h3.5" stroke="#a9b5c6" stroke-width="1"/><path d="M6.4 2.6L10.8 0v2c3.6.2 5.4 3.2 4.4 6.8-.8-2-2-3-4.4-3V8z" fill="#e23a3a"/><circle cx="11" cy="12.6" r="2.8" fill="#f4c838" stroke="#d2a41f" stroke-width=".9"/></svg>
<div class="t " style="left:853.5px;top:152.3px;height:12px;line-height:12px;">Отменить проведение</div>
<svg style="left:837.2px;top:173.2px" width="9.2" height="9.2" viewBox="0 0 16 16"><rect x="1" y="2.2" width="14.4" height="11.6" rx="1.8" fill="#e4ecf5" stroke="#8c9bb0" stroke-width="1.2"/><path d="M10.4 2.4v11.2M12.8 2.4v11.2" stroke="#9aa9bd" stroke-width=".9"/><circle cx="4.8" cy="8" r="3" fill="#27a444"/><path d="M3.2 8h3M5 6.6L6.6 8 5 9.4" stroke="#d9f2de" stroke-width=".8" fill="none"/></svg>
<div class="t " style="left:853.5px;top:172.2px;height:12px;line-height:12px;">Показать в списке</div>
<svg style="left:1017px;top:175.2px" width="3" height="5" viewBox="0 0 3 5"><path d="M0 0v5l3-2.5z" fill="#2e2e2e"/></svg>
<div class="t" style="left:837.1px;top:192.8px;font-size:4.8px;line-height:4.8px;font-weight:bold;color:#3aa352;">Дт</div>
<div class="t" style="left:840.268px;top:197.36px;font-size:4.8px;line-height:4.8px;font-weight:bold;color:#e2464b;">Кт</div>
<div class="t " style="left:853.5px;top:191.9px;height:12px;line-height:12px;">Движения документа</div>
<svg style="left:837.3px;top:210.9px" width="9" height="9" viewBox="0 0 9 9"><rect x="2.1" y=".6" width="4.8" height="2.6" fill="#fff" stroke="#4a6a96" stroke-width=".7"/><rect x=".4" y="3" width="8.2" height="3.6" rx="1" fill="#3f628f"/><rect x="2.1" y="5.3" width="4.8" height="3" fill="#fff" stroke="#4a6a96" stroke-width=".7"/></svg>
<div class="t " style="left:853.5px;top:209.8px;height:12px;line-height:12px;">Печать</div>
<svg style="left:1017px;top:212.8px" width="3" height="5" viewBox="0 0 3 5"><path d="M0 0v5l3-2.5z" fill="#2e2e2e"/></svg>
<svg style="left:837.4px;top:230.4px" width="8" height="5.6" viewBox="0 0 8 5.6"><rect x=".4" y=".4" width="7.2" height="4.8" rx=".6" fill="#f2c466" stroke="#d69a28" stroke-width=".8"/><path d="M.9 .9L4 3.4 7.1 .9" stroke="#fbe9c3" stroke-width=".7" fill="none"/></svg>
<div class="t " style="left:853.5px;top:227.7px;height:12px;line-height:12px;">Отправить по электронной почте</div>
<div class="t " style="left:853.5px;top:248.3px;height:12px;line-height:12px;">Создать на основании</div>
<svg style="left:1017px;top:251.3px" width="3" height="5" viewBox="0 0 3 5"><path d="M0 0v5l3-2.5z" fill="#2e2e2e"/></svg>
<svg style="left:837.3px;top:266.9px" width="9" height="9" viewBox="0 0 9 9"><g fill="#dbe8f6" stroke="#4a86c4" stroke-width=".7"><rect x="2" y="1.4" width="3.4" height="2.4"/><rect x="3.8" y="5" width="3.6" height="2.6"/></g><path d="M.5 2.6V.5h2.1M8.5 2.6V.5H6.4M.5 6.4v2.1h2.1M8.5 6.4v2.1H6.4M3 3.8v2.6h.8" fill="none" stroke="#4a86c4" stroke-width=".7"/></svg>
<div class="t " style="left:853.5px;top:265.8px;height:12px;line-height:12px;">Связанные документы</div>
<svg style="left:837.3px;top:284.9px" width="9" height="9" viewBox="0 0 9 9"><g transform="rotate(42 4.5 4.5)"><path d="M3 7.6V2.2a1.55 1.55 0 0 1 3.1 0v5.2a.95.95 0 0 1-1.9 0V3" fill="none" stroke="#808080" stroke-width="1.05" stroke-linecap="round"/></g></svg>
<div class="t " style="left:853.5px;top:283.8px;height:12px;line-height:12px;">Присоединенные файлы</div>
<svg style="left:836.8px;top:302px" width="10" height="9" viewBox="0 0 10 9"><path d="M.8 3.6l5.6-1.4 2.8 1.4v3.8L6.4 8.8.8 7.4z" fill="#1c1c1c"/><path d="M2.4 2.4l3.6-.9 1.8 1-3.6 1z" fill="#3a3a3a"/><rect x=".8" y=".3" width="1.8" height="1.2" fill="#2eae4e"/><rect x="7" y=".7" width="1.9" height="1.3" fill="#2a62d9"/><path d="M1.8 5.2l3.6.8" stroke="#c8c8c8" stroke-width=".6"/></svg>
<div class="t " style="left:853.5px;top:301.4px;height:12px;line-height:12px;">Чек</div>
<div class="t " style="left:853.5px;top:318.7px;height:12px;line-height:12px;">Пробитые чеки по документу</div>
<svg style="left:837.2px;top:337.9px" width="9.2" height="9.2" viewBox="0 0 16 16"><g fill="none" stroke="#a28a22" stroke-width="1.2"><rect x="4" y="2" width="9" height="12.2"/><path d="M6 8h5M6 11h5"/><path d="M4.2 13H1.8V7.4"/></g><rect x="4" y="2" width="9" height="3.4" fill="#a28a22"/><path d="M1.8 5.2L-.2 8.2h4zM12.6 7.8l3.2-2v4z" fill="#a28a22"/></svg>
<div class="t " style="left:853.5px;top:336.9px;height:12px;line-height:12px;">ЭДО</div>
<svg style="left:1017px;top:339.9px" width="3" height="5" viewBox="0 0 3 5"><path d="M0 0v5l3-2.5z" fill="#2e2e2e"/></svg>
<svg style="left:837.2px;top:357.8px" width="9.2" height="9.2" viewBox="0 0 16 16"><path d="M4.5 1.2h7l3 3v9H4.5z" fill="#fff" stroke="#98a4b5" stroke-width="1.2"/><path d="M1.6 3.2h2.6v11.4h9" fill="#f3f5f8" stroke="#98a4b5" stroke-width="1.2"/><rect x="5.8" y="7.6" width="1.9" height="4.4" fill="#e8a020"/><rect x="8.3" y="5.8" width="1.9" height="6.2" fill="#3aa655"/><rect x="10.8" y="8.4" width="1.9" height="3.6" fill="#d84040"/></svg>
<div class="t " style="left:853.5px;top:356.8px;height:12px;line-height:12px;">Отчеты</div>
<svg style="left:1017px;top:359.8px" width="3" height="5" viewBox="0 0 3 5"><path d="M0 0v5l3-2.5z" fill="#2e2e2e"/></svg>
<div class="t " style="left:853.5px;top:375.3px;height:12px;line-height:12px;">Новости</div>
<div class="t " style="left:853.5px;top:392.7px;height:12px;line-height:12px;">Проверить контрагентов</div>
<svg style="left:837.2px;top:411px" width="9.2" height="9.2" viewBox="0 0 16 16"><rect x="1" y="1.4" width="14.2" height="13.2" rx="1" fill="#d3dbe6" stroke="#8ea2bf" stroke-width="1.2"/><rect x="1" y="1.4" width="14.2" height="3" fill="#4f9ff0"/><rect x="4" y="6.6" width="8" height="5.6" fill="#eef1f5" stroke="#66758a" stroke-width="1.3"/><rect x="6.4" y="8.4" width="3.2" height="2" fill="#8b97a8"/></svg>
<div class="t " style="left:853.5px;top:410px;height:12px;line-height:12px;">Изменить форму...</div>
<div class="t" style="left:839.7px;top:431.2px;font-size:9.3px;line-height:11px;font-weight:bold;color:#2a2a2a;">?</div>
<div class="t " style="left:853.5px;top:431px;height:12px;line-height:12px;">Справка</div>
<div class="t sc" style="right:13.2px;top:431px;height:12px;line-height:12px;">F1</div>
<svg style="left:0px;top:0px" width="1024" height="467" viewBox="0 0 1024 467"><g stroke="#fa0c12" fill="#fa0c12" stroke-width="1.9"><path d="M992.1 61L998.1 312" fill="none"/><path d="M998.5 319.9l-2.9-9.2h5.6z" stroke="none"/><path d="M821 367.5L808.3 394" fill="none"/><path d="M805.5 400.2l1-9 4.7 2.2z" stroke="none"/></g></svg>
</div></body></html>
